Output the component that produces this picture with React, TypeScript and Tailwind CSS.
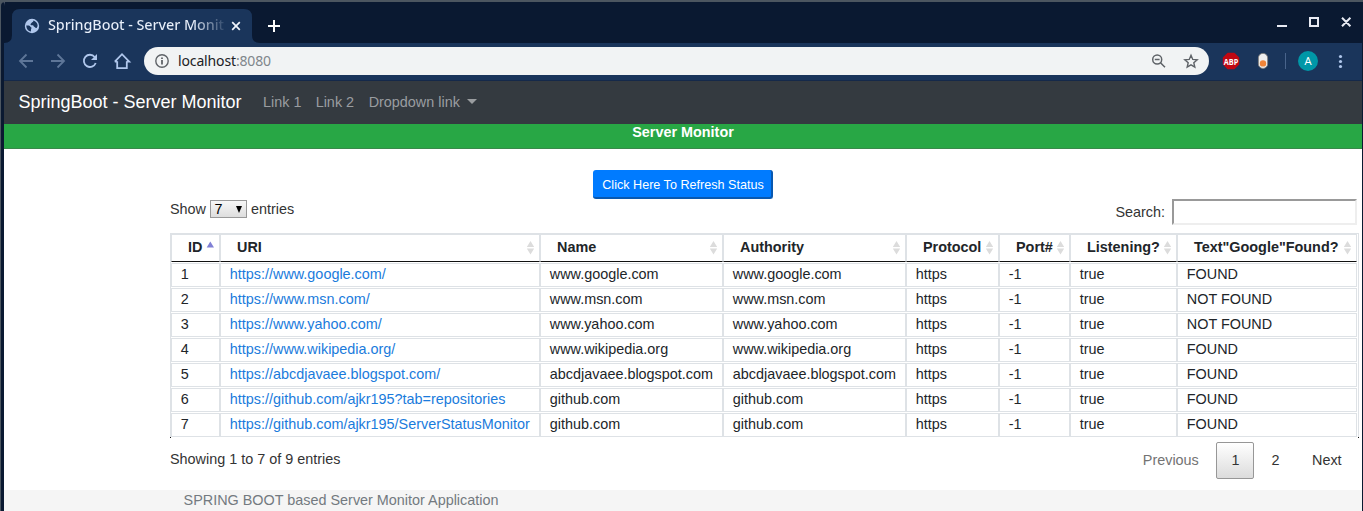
import React from "react";

type Server = { id: string; uri: string; host: string; found: string };

const servers: Server[] = [
  { id: "1", uri: "https://www.google.com/", host: "www.google.com", found: "FOUND" },
  { id: "2", uri: "https://www.msn.com/", host: "www.msn.com", found: "NOT FOUND" },
  { id: "3", uri: "https://www.yahoo.com/", host: "www.yahoo.com", found: "NOT FOUND" },
  { id: "4", uri: "https://www.wikipedia.org/", host: "www.wikipedia.org", found: "FOUND" },
  { id: "5", uri: "https://abcdjavaee.blogspot.com/", host: "abcdjavaee.blogspot.com", found: "FOUND" },
  { id: "6", uri: "https://github.com/ajkr195?tab=repositories", host: "github.com", found: "FOUND" },
  { id: "7", uri: "https://github.com/ajkr195/ServerStatusMonitor", host: "github.com", found: "FOUND" },
];

const headings = ["ID", "URI", "Name", "Authority", "Protocol", "Port#", "Listening?", 'Text"Google"Found?'];

const columns = "grid grid-cols-[49px_320px_183px_183px_93px_71px_107px_180px]";

function TabStrip() {
  return (
    <div className="flex h-[41px] items-end bg-[#0a1931] pl-2">
      <svg width="248" height="34" viewBox="0 0 248 34" className="-mr-[248px] shrink-0 overflow-visible">
        <path d="M-8 34Q0 34 0 26V8Q0 0 8 0H232Q240 0 240 8V26Q240 34 248 34Z" fill="#1a355b" />
      </svg>
      <div className="relative flex h-[34px] w-[248px] items-center pl-3">
        <svg width="16" height="16" viewBox="0 0 16 16" className="shrink-0">
          <circle cx="8" cy="8" r="7.2" fill="#b0c7ec" />
          <path d="M2.2 7.4H4.8Q6.2 7.6 6.4 8.8L7.6 9.8 7 11.4V13.6Q2.6 12.6 2.2 7.4M9.4 2.4Q9.4 4.1 8.2 4.3L7.2 5.2 6.4 6.2 7 7.2H8.8Q9.8 7.6 9.8 8.6 10.8 9 11.4 9.8L12.6 10Q13.8 8.6 13.6 7 12.9 3.6 9.4 2.4" fill="#1a355b" />
        </svg>
        <span className="mb-[2px] ml-2 w-[180px] whitespace-nowrap bg-[linear-gradient(90deg,#e8effa_80%,#1a355b_100%)] bg-clip-text font-['Noto_Sans',sans-serif] text-[14.4px] font-medium tracking-[-0.07px] text-transparent">
          SpringBoot - Server Monit
        </span>
        <svg width="10" height="10" viewBox="0 0 10 10" className="ml-[3px] shrink-0" stroke="#f1f5fc" strokeWidth="1.7">
          <path d="m1.2 1.2 7.6 7.6M8.8 1.2 1.2 8.8" />
        </svg>
      </div>
      <svg width="14" height="34" viewBox="0 0 14 34" className="ml-[7px]" stroke="#fff" strokeWidth="2">
        <path d="M1 17H13M7 11V23" />
      </svg>
      <svg width="90" height="34" viewBox="0 0 90 34" className="ml-auto mr-1 -translate-y-[1px]" fill="none" stroke="#e8eaf3" strokeWidth="2">
        <path d="M9 18H19M42 10H50V18H42ZM74 9.8l8.4 8.4M82.4 9.8 74 18.2" />
      </svg>
    </div>
  );
}

function Toolbar() {
  return (
    <div className="flex h-[37px] items-center bg-[#1a355b]">
      <svg width="140" height="37" viewBox="4 43 140 37" className="shrink-0" fill="none" strokeWidth="1.8">
        <path d="M33 61H20.5M26.5 54.5 20 61l6.5 6.5M51 61H63.5M57.5 54.5 64 61l-6.5 6.5" stroke="#5e7698" />
        <path d="M94.7 57A6.1 6.1 0 1 0 95.7 63" stroke="#b0c7ec" />
        <path d="M97 54V60H91Z" fill="#b0c7ec" />
        <path d="M117.2 61.2V68.2H126.8V61.2M114.8 61.6 122 54.2 129.2 61.6H126.8M114.8 61.6H117.2" stroke="#b0c7ec" />
      </svg>
      <div className="mb-[1px] flex h-7 w-[1065px] shrink-0 items-center rounded-full bg-[#f1f3f4] pl-[11px]">
        <svg width="14" height="14" viewBox="0 0 14 14" fill="none" stroke="#5f6368" strokeWidth="1.4">
          <circle cx="7" cy="7" r="6.2" />
          <path d="M7 6V10.6M7 3.4V4.9" strokeWidth="1.8" />
        </svg>
        <span className="mb-[2px] ml-[9px] whitespace-nowrap font-['Noto_Sans',sans-serif] text-[14px] tracking-[-0.14px] text-[#202124]">
          localhost<span className="text-[#80868b]">:8080</span>
        </span>
        <svg width="60" height="28" viewBox="1149 47 60 28" className="ml-auto" fill="none" stroke="#5f6368" strokeWidth="1.5">
          <circle cx="1157.2" cy="59.5" r="4.5" />
          <path d="M1160.5 62.8 1165 67.3M1154.8 59.5H1159.6" />
          <path transform="translate(0 .5)" d="M1191 54.8l1.75 4.1 4.45.4-3.4 2.95 1 4.35-3.8-2.3-3.8 2.3 1-4.35-3.4-2.95 4.45-.4Z" strokeWidth="1.4" />
        </svg>
      </div>
      <svg width="149" height="37" viewBox="1209 43 149 37" className="shrink-0">
        <path d="M1227.6 52.8h6.8l4.8 4.8v6.8l-4.8 4.8h-6.8l-4.8-4.8v-6.8Z" fill="#c00812" />
        <text x="1231" y="64.5" textAnchor="middle" fontFamily="Open Sans, sans-serif" fontWeight="700" fontSize="9.5" textLength="14.5" lengthAdjust="spacingAndGlyphs" fill="#fff">ABP</text>
        <rect x="1258.4" y="53.4" width="9.2" height="15" rx="4.4" fill="#eee" stroke="#807c78" strokeWidth=".8" />
        <circle cx="1263" cy="63.4" r="3.2" fill="#f08438" />
        <path d="M1285.5 53V69" stroke="#49648b" />
        <circle cx="1308" cy="61" r="10" fill="#0097a7" />
        <text x="1308" y="65" textAnchor="middle" fontFamily="Roboto, sans-serif" fontSize="11.5" fill="#fff">A</text>
        <g fill="#b0c7ec">
          <circle cx="1340.5" cy="56.5" r="1.6" />
          <circle cx="1340.5" cy="61.5" r="1.6" />
          <circle cx="1340.5" cy="66.5" r="1.6" />
        </g>
      </svg>
    </div>
  );
}

function SortMark({ ascending }: { ascending: boolean }) {
  return (
    <svg width="9" height="14" viewBox="0 0 9 14" className="ml-auto mt-[6px] mr-[4px] shrink-0">
      {ascending ? (
        <path d="M.7 6.5 4.3 .5 8 6.5Z" fill="#8080d5" />
      ) : (
        <path d="M.8 6 4.5 0 8.2 6ZM.8 7.5H8.2L4.5 13.5Z" fill="#dcdcdc" />
      )}
    </svg>
  );
}

function ServerTable() {
  return (
    <div className="h-[205px] w-[1189px] border border-b-0 border-[#dee2e6]">
      <div className={columns}>
        {headings.map((heading, index) => (
          <div key={heading} className="flex h-7 border border-b-[#111] border-[#dee2e6] pl-4 font-bold leading-[25px]">
            <span className="whitespace-nowrap">{heading}</span>
            <SortMark ascending={index === 0} />
          </div>
        ))}
      </div>
      {servers.map(({ id, uri, host, found }) => (
        <div key={id} className={columns + " mt-px"}>
          {[id, uri, host, host, "https", "-1", "true", found].map((value, index) => (
            <div key={index} className="h-6 whitespace-nowrap border border-[#dee2e6] pl-[8.8px] leading-[21px]">
              {index === 1 ? <a className="text-[#1a7bdc]">{value}</a> : value}
            </div>
          ))}
        </div>
      ))}
      <div className="-mx-px flex h-px justify-between">
        <span className="h-px w-px bg-[#111]" />
        <span className="h-px w-px bg-[#111]" />
      </div>
    </div>
  );
}

export default function App() {
  return (
    <div className="h-[511px] w-[1363px] overflow-hidden border-l border-[#4c5660] bg-[#4c5660] pt-[2px] font-['Liberation_Sans',sans-serif] text-[14.4px] text-[#212529]">
      <div className="h-[509px] w-[1362px] overflow-hidden rounded-tl-[4px] border-r border-l-[3px] border-[#0a1931] bg-white">
        <TabStrip />
        <Toolbar />
        <nav className="flex h-11 items-center border-t border-[#15294a] bg-[#343a40] pl-[14.4px] text-[#9a9da0]">
          <span className="mr-[21.6px] whitespace-nowrap text-[18px] text-white">SpringBoot - Server Monitor</span>
          <span className="mr-[14.2px]">Link 1</span>
          <span className="mr-[14.6px]">Link 2</span>
          <span>Dropdown link</span>
          <span className="-mt-[2px] ml-[6.8px] border-x-[5px] border-t-[5px] border-x-transparent border-t-[#9a9da0]" />
        </nav>
        <div className="h-[25px] border-b border-[#38894a] bg-[#28a745] text-center font-bold leading-[17px] text-white">Server Monitor</div>
        <div className="flex justify-center pt-[21px]">
          <button className="h-[29px] w-[180px] rounded-[3px] border-r-2 border-b-2 border-[#0858b0] bg-[#007bff] pt-[3px] pl-[2px] text-[12.6px] leading-[24px] whitespace-nowrap text-white">
            Click Here To Refresh Status
          </button>
        </div>
        <main className="ml-[166px] w-[1189px]">
          <div className="flex h-[34px] items-start justify-between text-[#333]">
            <div className="flex h-5 items-center">
              <span className="pt-[2px]">Show</span>
              <span className="mx-1 flex h-[18px] w-[37px] items-center border border-[#999] bg-gradient-to-b from-[#f7f7f7] to-[#dedede] pl-[3.5px] text-black">
                <span className="pt-[2px]">7</span>
                <svg width="6" height="7" viewBox="0 0 6 7" className="ml-auto mr-[4px]"><path d="M0 0H6L3 7Z" /></svg>
              </span>
              <span className="pt-[2px]">entries</span>
            </div>
            <label className="mr-[2px] flex h-[26px] items-center">
              <span className="pt-[2px]">Search:</span>
              <input className="ml-[7px] h-[26px] w-[185px] border-2 border-t-[#999] border-l-[#999] border-r-[#eee] border-b-[#eee] bg-white" />
            </label>
          </div>
          <ServerTable />
          <div className="flex h-[52px] items-start justify-between text-[#333]">
            <span className="pt-[12px] leading-[18px]">Showing 1 to 7 of 9 entries</span>
            <div className="mt-[4px] flex h-[37px] items-center">
              <span className="text-[#737373]">Previous</span>
              <span className="ml-[17.6px] flex h-[37px] w-[38px] items-center justify-center rounded-[2px] border border-[#979797] bg-gradient-to-b from-white to-[#dcdcdc]">1</span>
              <span className="ml-[17px]">2</span>
              <span className="mr-[17.4px] ml-[32.6px]">Next</span>
            </div>
          </div>
        </main>
        <footer className="h-[21px] bg-[#f5f5f5] pl-[179.6px] leading-[20px] text-[#737a80]">SPRING BOOT based Server Monitor Application</footer>
      </div>
    </div>
  );
}
